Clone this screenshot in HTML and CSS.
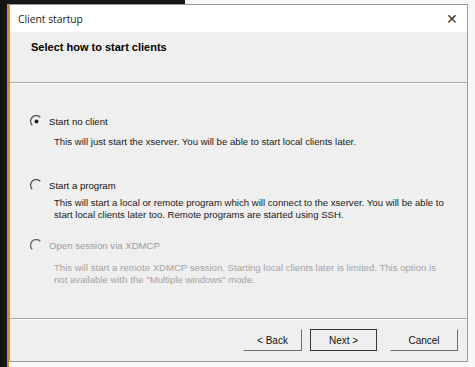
FILE: index.html
```html
<!DOCTYPE html>
<html lang="en">
<head>
    <meta charset="UTF-8">
    <title>Client startup</title>
    <link rel="stylesheet" href="styles.css">
</head>
<body>
    <div class="dialog">
        <div class="titlebar">
            <span class="title">Client startup</span>
            <span class="close">&#x2715;</span>
        </div>

        <div class="header">
            <h1>Select how to start clients</h1>
        </div>

        <div class="content">
            <div class="option first">
                <div class="option-label">
                    <svg class="radio" width="13" height="13" viewBox="0 0 13 13">
                        <path d="M2.2 10.3 A5.5 5.5 0 0 1 10.3 2.2" fill="none" stroke="#555" stroke-width="1.3"/>
                        <circle cx="6.5" cy="6.5" r="2" fill="#222"/>
                    </svg>
                    <span>Start no client</span>
                </div>
                <p class="option-desc">This will just start the xserver. You will be able to start local clients later.</p>
            </div>

            <div class="option second">
                <div class="option-label">
                    <svg class="radio" width="13" height="13" viewBox="0 0 13 13">
                        <path d="M2.2 10.3 A5.5 5.5 0 0 1 10.3 2.2" fill="none" stroke="#555" stroke-width="1.3"/>
                    </svg>
                    <span>Start a program</span>
                </div>
                <p class="option-desc">This will start a local or remote program which will connect to the xserver. You will be able to start local clients later too. Remote programs are started using SSH.</p>
            </div>

            <div class="option disabled">
                <div class="option-label">
                    <svg class="radio" width="13" height="13" viewBox="0 0 13 13">
                        <path d="M2.2 10.3 A5.5 5.5 0 0 1 10.3 2.2" fill="none" stroke="#666" stroke-width="1.3"/>
                    </svg>
                    <span>Open session via XDMCP</span>
                </div>
                <p class="option-desc">This will start a remote XDMCP session. Starting local clients later is limited. This option is not available with the "Multiple windows" mode.</p>
            </div>
        </div>

        <div class="buttons">
            <button class="btn back">&lt; Back</button>
            <button class="btn default">Next &gt;</button>
            <button class="btn">Cancel</button>
        </div>
    </div>
</body>
</html>
```

FILE: styles.css
```css
body {
    margin: 0;
    width: 475px;
    height: 367px;
    padding: 4px 0 0 9px;
    box-sizing: border-box;
    font-family: "Liberation Sans", Arial, sans-serif;
    font-size: 9.6px;
    color: #111;
    background:
        linear-gradient(#161616, #161616) 0 0 / 185px 4px no-repeat,
        linear-gradient(to right, #101010 0, #1a1a1a 7px, #c98a3c 7px, #c98a3c 9px) 0 0 / 9px 100% no-repeat,
        #f7f7f5;
}

.dialog {
    width: 459px;
    height: 358px;
    box-sizing: border-box;
    border: 1px solid #9a9a9a;
    background: #efefef;
    display: flex;
    flex-direction: column;
}

/* --- title bar --- */
.titlebar {
    height: 27px;
    background: #fff;
    display: flex;
    align-items: center;
    justify-content: space-between;
    padding: 0 9px 0 8px;
    flex-shrink: 0;
}

.title {
    font-family: "Open Sans", sans-serif;
    font-size: 10.3px;
    color: #222;
}

.close {
    font-size: 14px;
    color: #333;
}

/* --- header --- */
.header {
    height: 51px;
    padding: 9px 0 0 21px;
    box-sizing: border-box;
    border-bottom: 1px solid #a8a8a8;
    box-shadow: 0 1px 0 #fbfbfb;
    flex-shrink: 0;
}

.header h1 {
    margin: 0;
    font-size: 11px;
    font-weight: bold;
    color: #000;
}

/* --- options --- */
.content {
    flex: 1;
    padding: 31px 0 0 20px;
    border-bottom: 1px solid #a8a8a8;
    box-shadow: 0 1px 0 #fbfbfb;
}

.option.first {
    height: 64px;
}

.option.second {
    height: 60px;
}

.option-label {
    display: flex;
    align-items: center;
    gap: 6px;
    height: 15px;
}

.radio {
    display: block;
}

.option-desc {
    margin: 7px 0 0 24px;
    width: 395px;
    line-height: 12px;
    color: #1a1a1a;
}

.option.second .option-desc {
    margin-top: 4px;
}

.option.disabled .option-desc {
    margin-top: 9px;
}

.option.disabled {
    color: #9c9c9c;
}

.option.disabled .option-desc {
    color: #a4a4a4;
}

/* --- buttons --- */
.buttons {
    height: 42px;
    display: flex;
    justify-content: flex-end;
    align-items: center;
    gap: 8px;
    padding: 0 9px 0 0;
    flex-shrink: 0;
}

.btn {
    font-family: "Liberation Sans", Arial, sans-serif;
    font-size: 10px;
    color: #111;
    height: 22px;
    width: 68px;
    background: #efefef;
    border: 1px solid #efefef;
    border-right-color: #707070;
    border-bottom-color: #707070;
    padding: 0;
}

.btn.back {
    width: 59px;
}

.btn.default {
    width: 67px;
    border: 1px solid #3a3a3a;
    margin-right: 5px;
}
```
